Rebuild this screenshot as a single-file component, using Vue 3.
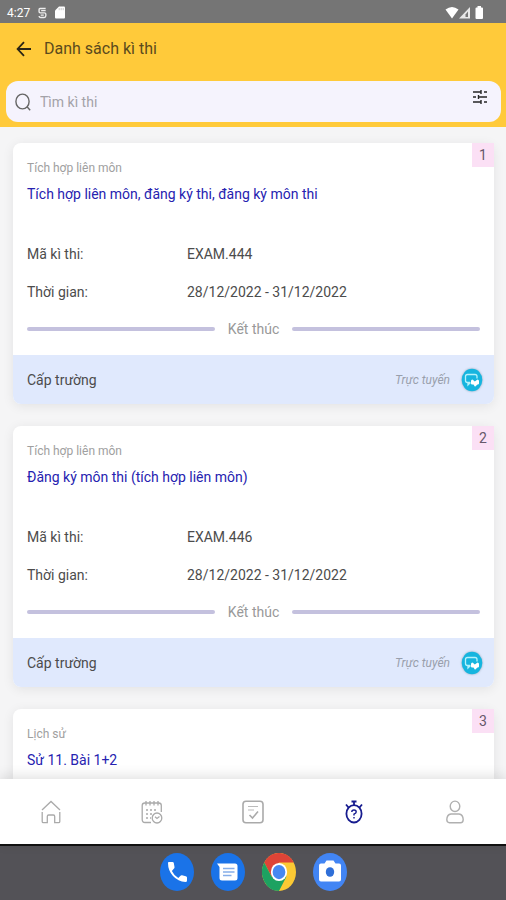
<script setup>
import { ref } from 'vue'

const query = ref('')
const exams = [
  { id: 1, subject: 'Tích hợp liên môn', title: 'Tích hợp liên môn, đăng ký thi, đăng ký môn thi', code: 'EXAM.444', time: '28/12/2022 - 31/12/2022' },
  { id: 2, subject: 'Tích hợp liên môn', title: 'Đăng ký môn thi (tích hợp liên môn)', code: 'EXAM.446', time: '28/12/2022 - 31/12/2022' },
  { id: 3, subject: 'Lịch sử', title: 'Sử 11. Bài 1+2' }
]
</script>

<template>
  <div class="screen">
    <div class="status">
      <span class="clock">4:27</span>
      <svg width="9" height="14" viewBox="0 0 10 14" fill="none" stroke="#eee" stroke-width="1.5"><path d="M8.5 2H2.200Q1.200 2 1.200 3V5.600Q1.200 6.800 2.500 6.800H7.200Q8.700 6.800 8.700 8.200V10Q8.700 12 6.800 12H3Q1.300 12 1.300 10.200M3.500 4.400H8.500M3 9.400H6.400" /></svg>
      <svg width="10" height="13" viewBox="0 0 10 13"><path d="M4 .5H9Q10 .5 10 1.5V11.5Q10 12.5 9 12.5H1Q0 12.5 0 11.5V4.5Z" fill="#fff" /><path d="M4.200 2V4.200M6.200 2V4.200M8.200 2V4.200" stroke="#bbb" stroke-width=".8" /></svg>
      <svg class="signal" width="39" height="14" viewBox="0 0 39 14">
        <path d="M.5 3.500Q7 -1.500 13.500 3.500L7 12.500Z" fill="#fff" />
        <path d="M25 1V12.500H14Z" fill="#e8e8e8" /><path d="M23 5.500V11H20.500V8.500Z" fill="#777" />
        <path d="M32.500 0H36V1.500H37Q38 1.500 38 2.500V12Q38 13 37 13H31.500Q30.500 13 30.500 12V2.500Q30.500 1.500 31.500 1.500H32.500Z" fill="#fff" />
      </svg>
    </div>

    <header class="header">
      <div class="bar">
        <button class="plain" aria-label="Quay lại">
          <svg width="16" height="16" viewBox="0 0 16 16" fill="none" stroke="#2a2516" stroke-width="1.8"><path d="M15 8H2M8 1.200L1.600 8L8 14.800" /></svg>
        </button>
        <h1>Danh sách kì thi</h1>
      </div>
      <div class="search">
        <svg width="18" height="19" viewBox="0 0 18 19" fill="none" stroke="#666" stroke-width="1.4"><ellipse cx="8.500" cy="9.500" rx="6.600" ry="7.400" /><path d="M13 14.800L16.200 18.200" /></svg>
        <input v-model="query" type="search" placeholder="Tìm kì thi" aria-label="Tìm kì thi">
        <button class="plain filter" aria-label="Bộ lọc">
          <svg width="16" height="16" viewBox="0 0 16 16" fill="none" stroke="#262626" stroke-width="1.4"><path d="M1 3H9.500M12 3H15M1 8H4M6.500 8H15M1 13H9.500M12 13H15M9 1V5M6.500 6V10M9 11V15" /></svg>
        </button>
      </div>
    </header>

    <main class="list">
      <article v-for="exam in exams" :key="exam.id" class="card">
        <span class="badge">{{ exam.id }}</span>
        <div class="body">
          <p class="subject">{{ exam.subject }}</p>
          <h2>{{ exam.title }}</h2>
          <template v-if="exam.code">
            <dl>
              <dt>Mã kì thi:</dt><dd>{{ exam.code }}</dd>
              <dt>Thời gian:</dt><dd>{{ exam.time }}</dd>
            </dl>
            <div class="state">Kết thúc</div>
          </template>
        </div>
        <footer v-if="exam.code">
          <span class="level">Cấp trường</span>
          <em>Trực tuyến</em>
          <svg class="online" width="22" height="24" viewBox="0 0 22 24">
            <ellipse cx="11" cy="12" rx="10.300" ry="11.300" fill="#16b5df" />
            <path d="M9 14.500H6.500Q4.500 14.500 4.500 12.500V8.500Q4.500 6.500 6.500 6.500H14Q16 6.500 16 8.500V10.500M7 14.500V17L9.500 14.500" fill="none" stroke="#b4f2fb" stroke-width="1.300" />
            <path d="M10 13Q10 11.500 11.500 11.500L13.800 13.500L16.500 11.500Q18 11.500 18 13V15.500Q18 16.500 16.500 16.500L14 18.800L12.500 16.500H11Q10 16.500 10 15.500Z" fill="#fff" />
          </svg>
        </footer>
      </article>
    </main>

    <nav class="tabs" aria-label="Điều hướng">
      <a href="#" aria-label="Trang chủ">
        <svg width="20" height="24" viewBox="0 0 20 24" fill="none" stroke="#aaa" stroke-width="1.3"><path d="M1 10L10 1.500L19 10M1.200 12V21.500Q1.200 22.700 2.400 22.700H6.300V16.500Q6.300 15 7.600 15H12.400Q13.700 15 13.700 16.500V22.700H17.600Q18.800 22.700 18.800 21.500V12" /></svg>
      </a>
      <a href="#" aria-label="Lịch">
        <svg width="22" height="24" viewBox="0 0 22 24" fill="none" stroke="#aaa" stroke-width="1.3"><path d="M10 22.500H4Q1.200 22.500 1.200 19.500V5.500Q1.200 3 3.800 3H17.800Q20.300 3 20.300 5.500V12M5 1V5.500M9 1V5.500M13 1V5.500M17 1V5.500" /><path d="M5 10H17M5 14H11M5 18H10" stroke-dasharray="2 2" /><ellipse cx="16" cy="18" rx="4.800" ry="5" /><path d="M14 16.800L16 18.500L18.500 16.500" /></svg>
      </a>
      <a href="#" aria-label="Bài tập">
        <svg width="22" height="24" viewBox="0 0 22 24" fill="none" stroke="#aaa" stroke-width="1.6"><rect x="1" y="1.200" width="20" height="21.500" rx="3" /><path d="M6 6.500H16M6 10H12" stroke="#bbb" stroke-width="1.2" /><path d="M7.500 15L10.500 18L16 11.500" /></svg>
      </a>
      <a href="#" aria-label="Kì thi" aria-current="page">
        <svg width="18" height="24" viewBox="0 0 18 24" fill="none" stroke="#171c8f" stroke-width="1.8"><ellipse cx="9" cy="13.800" rx="7.600" ry="8.700" /><path d="M6.500 1.500H11.500M9 1.500V5M1 4.500L3.500 7.500M17 4.500L14.500 7.500" /><path d="M6.800 12Q6.800 10 9 10Q11.200 10 11.200 12Q11.200 13 9 14.200V15.500M9 17V18.500" stroke-width="1.4" /></svg>
      </a>
      <a href="#" aria-label="Cá nhân">
        <svg width="18" height="24" viewBox="0 0 18 24" fill="none" stroke="#b0b0b0" stroke-width="1.4"><ellipse cx="9" cy="6.300" rx="4.800" ry="5.200" /><path d="M5 14H13Q17 14.500 17.200 19.500Q17.200 22.700 14.500 22.700H3.500Q.8 22.700 .8 19.500Q1 14.500 5 14Z" /></svg>
      </a>
    </nav>

    <div class="dock">
      <button class="plain" aria-label="Điện thoại">
        <svg width="34" height="38" viewBox="0 0 34 38"><ellipse cx="17" cy="19" rx="17" ry="19" fill="#1a73e8" /><path d="M8 10Q7.800 9 9 9H12.500Q13.600 9 13.800 10L14.500 14Q14.600 15 14 15.600L11.900 17.900Q14.200 22.700 18.300 25L20.500 22.700Q21 22.100 22 22.300L25.800 23.200Q27 23.500 27 24.600V27.500Q27 29 25.500 29Q18 28.500 13 23Q8 17.500 8 10Z" fill="#fff" /></svg>
      </button>
      <button class="plain" aria-label="Tin nhắn">
        <svg width="34" height="38" viewBox="0 0 34 38"><ellipse cx="17" cy="19" rx="17" ry="19" fill="#1a73e8" /><path d="M6 10.500H24Q26.500 10.500 26.500 13V25Q26.500 27.500 24 27.500H11Q8.500 27.500 8.500 25V14Z" fill="#fff" /><path d="M12 15.500H23.500M12 19H23.500M12 22.500H20.500" stroke="#86aee9" stroke-width="1.500" /></svg>
      </button>
      <button class="plain" aria-label="Chrome">
        <svg width="34" height="38" viewBox="0 0 48 48" preserveAspectRatio="none"><circle cx="24" cy="24" r="24" fill="#fbc934" /><path d="M3.200 12A24 24 0 0 1 44.800 12H24L13.600 30Z" fill="#de4437" /><path d="M3.200 12A24 24 0 0 0 24 48L34.400 30L24 24L13.600 30Z" fill="#1da261" /><circle cx="24" cy="24" r="11.500" fill="#fff" /><circle cx="24" cy="24" r="9" fill="#4688f1" /></svg>
      </button>
      <button class="plain" aria-label="Máy ảnh">
        <svg width="34" height="38" viewBox="0 0 34 38"><ellipse cx="17" cy="19" rx="17" ry="19" fill="#4285f4" /><path d="M8 10.500H11.500L13.500 7.500H20.500L22.500 10.500H26Q28 10.500 28 12.500V26.500Q28 28.500 26 28.500H8Q6 28.500 6 26.500V12.500Q6 10.500 8 10.500Z" fill="#fff" /><ellipse cx="17" cy="19" rx="4.200" ry="4.800" fill="#2f6fd8" /></svg>
      </button>
    </div>
  </div>
</template>

<style>
body { margin: 0; }
</style>

<style scoped>
* { box-sizing: border-box; }
.screen {
  display: flex; flex-direction: column; height: 100vh; overflow: hidden;
  background: #f5f5f6; color: #4c4c4c;
  font-family: Roboto, "Noto Sans", sans-serif; font-size: 14px; line-height: 20px;
}
svg { display: block; flex: none; }
h1, h2, p, dl, dd { margin: 0; font-weight: 400; }
.plain { padding: 0; border: 0; background: none; cursor: pointer; }
.status {
  flex: none; display: flex; align-items: center; gap: 8px; height: 23px; padding: 2px 22px 0 7px;
  background: #757575; color: #fff; font-size: 12px;
}
.signal { margin-left: auto; }
.header { flex: none; background: #ffca3a; padding: 0 5px 5px 6px; }
.bar { display: flex; align-items: center; gap: 12px; height: 52px; padding: 0 10px; margin-bottom: 6px; }
h1 { font-size: 16px; color: #5b4a1d; }
.search {
  display: flex; align-items: center; gap: 8px; height: 41px; padding: 0 13px 0 8px;
  border-radius: 12px; background: #f5f3fd;
}
input { flex: 1; min-width: 0; padding: 0; border: 0; outline: 0; background: none; font: inherit; color: #555; }
input::placeholder { color: #a3a2a8; opacity: 1; }
.filter { align-self: flex-start; padding-top: 8px; }
.list {
  flex: 1; min-height: 0; overflow: hidden; display: flex; flex-direction: column; gap: 22px;
  padding: 16px 12px 0 13px;
}
.card {
  position: relative; flex: none; border-radius: 8px; background: #fff;
  box-shadow: 0 2px 12px rgba(0, 0, 0, .08);
}
.card:last-child { flex: 1 0 auto; border-radius: 8px 8px 0 0; }
.badge {
  position: absolute; top: 0; right: 0; width: 22px; height: 24px;
  background: #fbe0f5; text-align: center; line-height: 24px; color: #66586a;
}
.body { padding: 15px 14px 16px; }
.card:last-child .body { padding-bottom: 0; }
.subject { font-size: 12px; color: #a0a0a0; }
h2 { margin-top: 6px; font-size: 14px; color: #2622b0; }
dl { display: grid; grid-template-columns: 160px 1fr; row-gap: 18px; margin-top: 40px; }
.state { display: flex; align-items: center; gap: 13px; margin-top: 17px; color: #999; }
.state::before, .state::after { content: ""; flex: 1; height: 4px; border-radius: 2px; background: #c4c1de; }
footer {
  display: flex; align-items: center; height: 49px; padding: 0 11px 0 14px;
  background: #e0e9fd; border-radius: 0 0 8px 8px;
}
.level { margin-right: auto; }
em { font-size: 12px; color: #999fac; margin-right: 11px; }
.online { filter: drop-shadow(0 0 1px #8fa6ba); }
.tabs {
  position: relative; flex: none; display: flex; height: 67px; background: #fff;
  border-bottom: 2px solid #111; box-shadow: 0 -3px 12px rgba(0, 0, 0, .12);
}
.tabs a { flex: 1; display: flex; align-items: center; justify-content: center; }
.dock {
  flex: none; display: flex; justify-content: center; align-items: flex-start; gap: 17px;
  height: 54px; padding-top: 7px; background: #535257;
}
</style>
